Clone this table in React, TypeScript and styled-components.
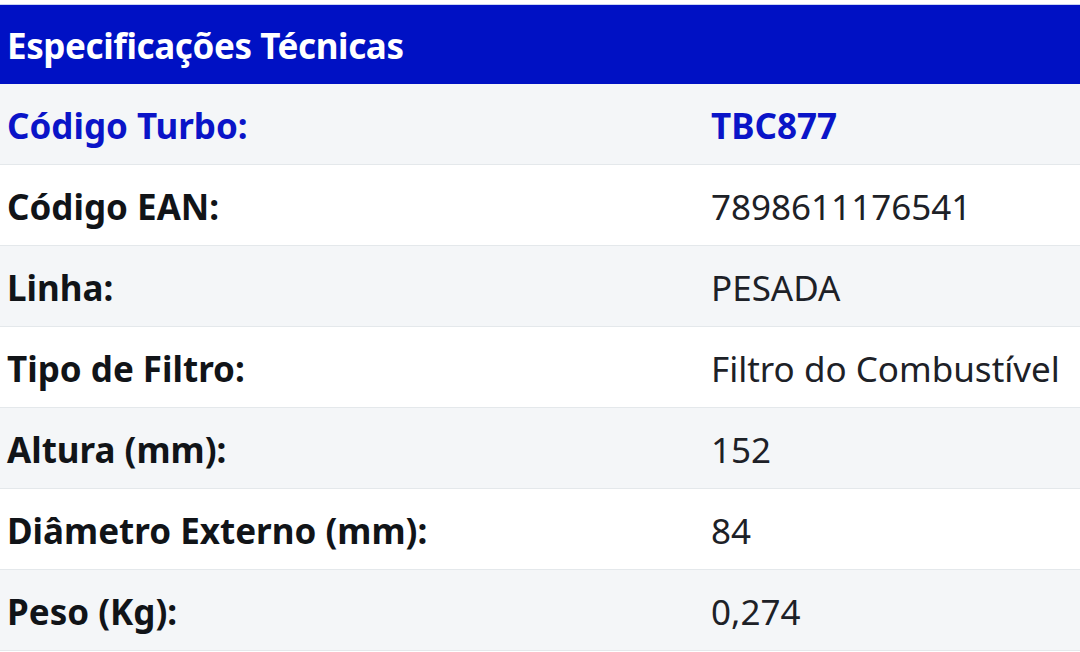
import React from 'react';
import styled, { createGlobalStyle } from 'styled-components';

const GlobalStyle = createGlobalStyle`
  html, body {
    margin: 0;
    padding: 0;
    background: #ffffff;
  }
  body {
    font-family: "Noto Sans", "Open Sans", sans-serif;
  }
`;

const specs = [
  { label: 'Código Turbo:', value: 'TBC877', highlight: true },
  { label: 'Código EAN:', value: '7898611176541' },
  { label: 'Linha:', value: 'PESADA' },
  { label: 'Tipo de Filtro:', value: 'Filtro do Combustível' },
  { label: 'Altura (mm):', value: '152' },
  { label: 'Diâmetro Externo (mm):', value: '84' },
  { label: 'Peso (Kg):', value: '0,274' },
];

const App: React.FC = () => {
  return (
    <>
      <GlobalStyle />
      <Wrapper>
        <SpecTable>
          <colgroup>
            <LabelCol />
            <col />
          </colgroup>
          <thead>
            <tr>
              <HeaderCell colSpan={2}>Especificações Técnicas</HeaderCell>
            </tr>
          </thead>
          <tbody>
            {specs.map((s, i) => (
              <Row key={i} $striped={i % 2 === 0}>
                <LabelCell $highlight={s.highlight}>{s.label}</LabelCell>
                <ValueCell $highlight={s.highlight}>{s.value}</ValueCell>
              </Row>
            ))}
          </tbody>
        </SpecTable>
      </Wrapper>
    </>
  );
};

export default App;

const Wrapper = styled.div`
  padding-top: 4px;
`;

const SpecTable = styled.table`
  width: 1080px;
  border-collapse: collapse;
  table-layout: fixed;
  border-top: 1px solid #c9d3f2;
`;

const LabelCol = styled.col`
  width: 704px;
`;

const HeaderCell = styled.th`
  background: #0011c4;
  color: #ffffff;
  text-align: left;
  font-size: 35px;
  font-weight: 700;
  height: 79px;
  padding: 2px 7px 0;
  box-sizing: border-box;
  letter-spacing: -0.4px;
  white-space: nowrap;
`;

const Row = styled.tr<{ $striped?: boolean }>`
  background: ${(p) => (p.$striped ? '#f4f6f8' : '#ffffff')};
  border-bottom: 1px solid #e4e8eb;
  height: 81px;
`;

const LabelCell = styled.td<{ $highlight?: boolean }>`
  padding: 3px 7px 0;
  font-size: 35px;
  font-weight: 700;
  color: ${(p) => (p.$highlight ? '#0a14c8' : '#111418')};
  box-sizing: border-box;
  white-space: nowrap;
`;

const ValueCell = styled.td<{ $highlight?: boolean }>`
  padding: 3px 0 0 7px;
  font-size: 35px;
  font-weight: ${(p) => (p.$highlight ? 700 : 400)};
  color: ${(p) => (p.$highlight ? '#0a14c8' : '#1d2127')};
  white-space: nowrap;
  box-sizing: border-box;
`;
